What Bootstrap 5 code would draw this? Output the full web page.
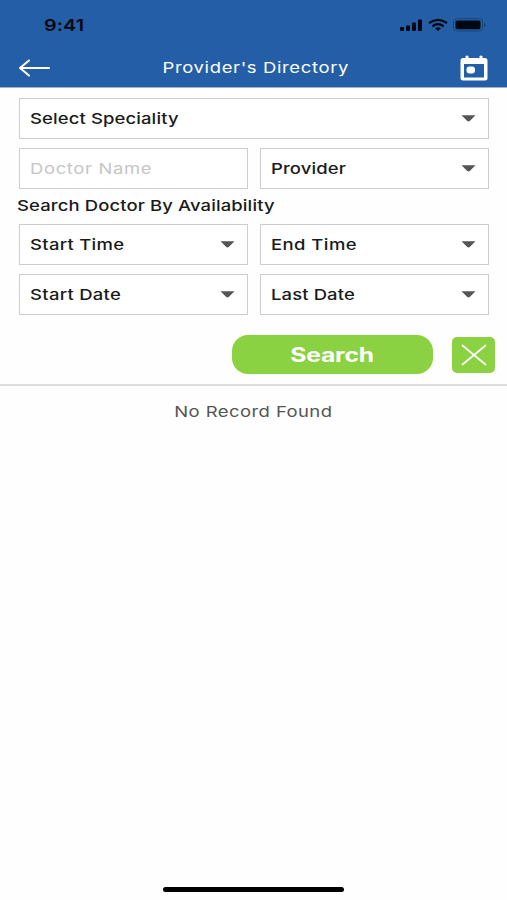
<!DOCTYPE html>
<html lang="en">
<head>
<meta charset="utf-8">
<meta name="viewport" content="width=device-width, initial-scale=1">
<title>Provider's Directory</title>
<link href="https://cdn.jsdelivr.net/npm/bootstrap@5.3.0/dist/css/bootstrap.min.css" rel="stylesheet">
<style>
body{font-family:Inter,"Open Sans",sans-serif;font-size:15px;font-weight:500;color:#1a1a1a;background:#fefefe;line-height:20px}
.screen{height:900px;overflow:hidden}
.topbar{background:#235ea7;height:88px;border-bottom:1px solid #9fb2cf}
.status{height:48px;padding:1px 20px 0 44px;color:#020811}
.clock{font-size:16px;font-weight:600}
.title-row{height:39px;padding:0 19px 0 18px;color:#fff}
.title{font-weight:400}
/* wide letterforms */
.wide{display:inline-block;white-space:nowrap;letter-spacing:.1px;transform:scaleX(1.23);transform-origin:left center}
.mid{transform-origin:center}
.ls-2{letter-spacing:.24px}
.ls-3{letter-spacing:.36px}
.ls-5{letter-spacing:.52px}
.filters{padding:10px 18px 0 19px;height:298px;border-bottom:2px solid #dedede}
.field{height:41px;border:1px solid #cdcdcd;background:#fff;padding:0 12px 0 10px}
.pair{display:grid;grid-template-columns:229px 229px;column-gap:12px;row-gap:9px}
.name-row{margin-top:9px}
.group-title{height:35px;margin-left:-2px;padding-top:7px}
.hint{color:#c6c6c6;font-weight:400}
.caret{width:15px;height:7px;flex:none}
.actions{margin-top:20px;margin-right:-6px;gap:19px}
.btn-search,.btn-search:hover{width:201px;height:39px;border-radius:16px;background:#8bd242;color:#fff;font-size:20px;font-weight:700;letter-spacing:0}
.btn-search .wide{letter-spacing:-.1px}
.btn-clear,.btn-clear:hover{width:43px;height:36px;border-radius:5px;background:#8bd242}
.empty{color:#555;font-weight:400}
.homebar{width:181px;height:5px;border-radius:3px;background:#000;margin-bottom:8px}
</style>
</head>
<body>
<svg class="d-none"><symbol id="caret" viewBox="0 0 15 7"><path d="M.5 .3H14.500L9 5.800Q7.500 7 6 5.800Z" fill="#555"/></symbol></svg>
<main class="screen d-flex flex-column">
<header class="topbar">
<div class="status d-flex align-items-center justify-content-between">
<span class="wide clock">9:41</span>
<svg width="88" height="14" viewBox="0 0 88 14" fill="#020811">
<rect x="1" y="9" width="4" height="4" rx="1"/><rect x="7" y="7.500" width="4" height="5.500" rx="1"/><rect x="13" y="4.500" width="4" height="8.500" rx="1"/><rect x="19" y="1.500" width="4" height="11.500" rx="1"/>
<g fill="none" stroke="#020811" stroke-width="2.200"><path d="M30 5.200Q39 -1.400 48 5.200"/><path d="M33.300 8.300Q39 4 44.700 8.300"/></g><path d="M36 10.300Q39 8.300 42 10.300L39 13Z"/>
<rect x="54.500" y=".7" width="29" height="12.300" rx="3.500" fill="none" stroke="#1a457b"/><rect x="56.500" y="2.500" width="25" height="8.700" rx="1.800"/><path d="M85 5Q88 6.900 85 8.800Z" fill="#123a6c"/>
</svg>
</div>
<div class="title-row d-flex align-items-center justify-content-between">
<svg width="33" height="18" viewBox="0 0 33 18" fill="none" stroke="#fff" stroke-width="2" stroke-linecap="round" stroke-linejoin="round"><path d="M31 9H2M11 1.500L2 9L11 16.500"/></svg>
<span class="wide mid title ls-5">Provider's Directory</span>
<svg width="28" height="26" viewBox="0 0 28 26"><path fill="#fff" fill-rule="evenodd" d="M5.500 1Q7 0 8.500 1V3H19.500V1Q21 0 22.500 1V3H25Q27.500 3 27.500 6V23Q27.500 25.500 25 25.500H3Q.5 25.500 .5 23V6Q.5 3 3 3H5.500ZM4 9V22.500H24V9Z"/><rect x="6.500" y="11.500" width="8.500" height="7" rx="3" fill="#fff"/></svg>
</div>
</header>
<section class="filters">
<div class="field d-flex align-items-center justify-content-between"><span class="wide">Select Speciality</span><svg class="caret"><use href="#caret"/></svg></div>
<div class="pair name-row">
<div class="field d-flex align-items-center"><span class="wide hint ls-5">Doctor Name</span></div>
<div class="field d-flex align-items-center justify-content-between"><span class="wide">Provider</span><svg class="caret"><use href="#caret"/></svg></div>
</div>
<div class="group-title"><span class="wide">Search Doctor By Availability</span></div>
<div class="pair">
<div class="field d-flex align-items-center justify-content-between"><span class="wide ls-2">Start Time</span><svg class="caret"><use href="#caret"/></svg></div>
<div class="field d-flex align-items-center justify-content-between"><span class="wide ls-3">End Time</span><svg class="caret"><use href="#caret"/></svg></div>
<div class="field d-flex align-items-center justify-content-between"><span class="wide ls-2">Start Date</span><svg class="caret"><use href="#caret"/></svg></div>
<div class="field d-flex align-items-center justify-content-between"><span class="wide">Last Date</span><svg class="caret"><use href="#caret"/></svg></div>
</div>
<div class="actions d-flex align-items-center justify-content-end">
<button type="button" class="btn btn-search border-0 p-0"><span class="wide mid">Search</span></button>
<button type="button" class="btn btn-clear border-0 p-0 d-flex align-items-center justify-content-center" aria-label="Clear"><svg width="26" height="22" viewBox="0 0 26 22" fill="none" stroke="#fff" stroke-width="1.700" stroke-linecap="round"><path d="M1.500 1.500L24.500 20.500M24.500 1.500L1.500 20.500"/></svg></button>
</div>
</section>
<div class="text-center pt-3"><span class="wide mid empty ls-3">No Record Found</span></div>
<div class="homebar mt-auto mx-auto"></div>
</main>
<script src="https://cdn.jsdelivr.net/npm/bootstrap@5.3.0/dist/js/bootstrap.bundle.min.js"></script>
</body>
</html>
